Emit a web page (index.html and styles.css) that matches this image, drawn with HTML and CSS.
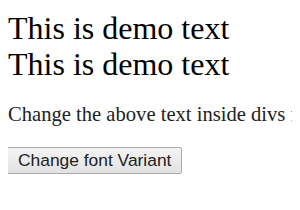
FILE: index.html
```html
<!DOCTYPE html>
<html lang="en">
  <head>
    <meta charset="UTF-8" />
    <title>font-variant demo</title>
    <link rel="stylesheet" href="styles.css">
  </head>
  <body>
    <div class="demo" id="demo1">This is demo text</div>
    <div class="demo" id="demo2">This is demo text</div>

    <p class="hint">Change the above text inside divs from normal to small caps.</p>

    <button class="change-btn" onclick="changeVariant()">Change font Variant</button>

    <script>
      function changeVariant() {
        document.getElementById("demo1").style.fontVariant = "small-caps";
        document.getElementById("demo2").style.fontVariant = "small-caps";
      }
    </script>
  </body>
</html>
```

FILE: styles.css
```css
body {
  margin: 10px 8px 8px;
  font-family: "Liberation Serif", "Times New Roman", serif;
  color: #000;
  overflow: hidden;
}

.demo {
  font-size: 32px;
  line-height: 36px;
  white-space: nowrap;
}

.hint {
  font-size: 20.6px;
  margin: 21px 0 21px;
  white-space: nowrap;
  color: #222;
}

.change-btn {
  font-family: "Liberation Sans", Arial, sans-serif;
  font-size: 17.4px;
  line-height: 19px;
  padding: 3px 10px;
  margin: 0 0 0 -1px;
  color: #222;
  background: linear-gradient(#f4f4f4, #e2e2e2);
  border: 1px solid #aaa;
  border-radius: 2px;
}
```
